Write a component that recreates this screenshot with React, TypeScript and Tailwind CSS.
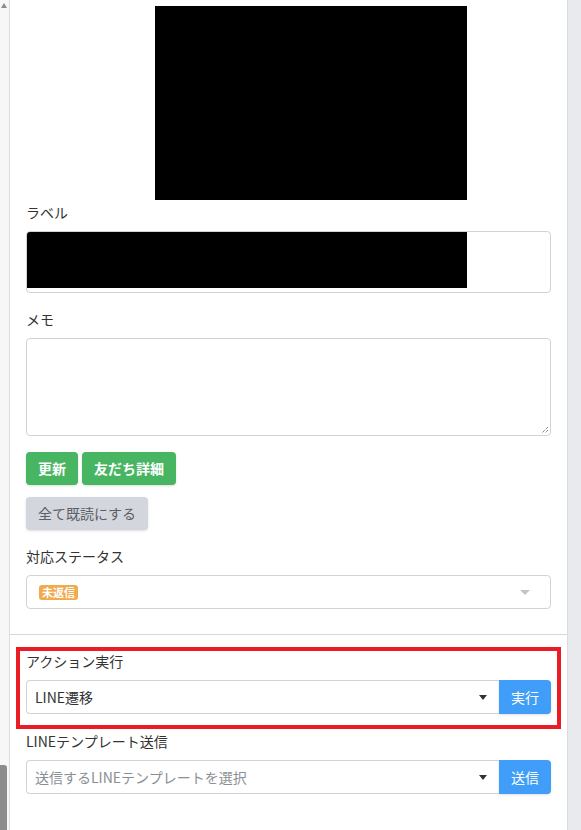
const font = { fontFamily: '"Noto Sans CJK JP", "Noto Sans", sans-serif' };

const Caret = ({ light }: { light?: boolean }) => (
    <span
        className={
            light
                ? "h-0 w-0 border-x-[5px] border-t-[5px] border-x-transparent border-t-[#c0c4cc]"
                : "h-0 w-0 border-x-[4px] border-t-[5px] border-x-transparent border-t-[#333]"
        }
    />
);

const SelectWithButton = ({
    value,
    placeholder,
    button,
}: {
    value?: string;
    placeholder?: string;
    button: string;
}) => (
    <div className="flex h-[34px]">
        <div className="flex flex-1 items-center justify-between rounded-l-[4px] border border-r-0 border-[#ced4da] pl-[8px] pr-[12px] text-[14px]">
            {value ? (
                <span className="text-[#333]">{value}</span>
            ) : (
                <span className="text-[#8a8f95]">{placeholder}</span>
            )}
            <Caret />
        </div>
        <button className="w-[52px] rounded-r-[4px] bg-[#409ef8] text-[14px] text-white shadow-sm">
            {button}
        </button>
    </div>
);

export default function App() {
    return (
        <div className="flex h-[830px] w-[581px] overflow-hidden bg-white text-[#333]" style={font}>
            {/* scrollbar strip */}
            <div className="flex w-[9px] flex-col justify-between bg-[#f7f7f7]">
                <span className="ml-[1px] mt-[3px] h-0 w-0 border-x-[3px] border-b-[5px] border-x-transparent border-b-[#8c8c8c]" />
                <span className="h-[65px] w-[7px] rounded-tr-[3px] bg-[#8c8c8c]" />
            </div>

            <div className="flex w-[559px] flex-col border-x border-[#dcdcdc] px-[16px] pt-[6px]">
                <div className="ml-[129px] h-[194px] w-[312px] bg-black" />

                <div className="mt-[2px] text-[14px] leading-[20px]">ラベル</div>
                <div className="mt-[9px] h-[62px] rounded-[4px] border border-[#ced4da] bg-white">
                    <div className="h-[56px] w-[440px] rounded-tl-[3px] bg-black" />
                </div>

                <div className="mt-[16px] text-[14px] leading-[20px]">メモ</div>
                <div className="relative mt-[9px] h-[98px] rounded-[4px] border border-[#ced4da]">
                    <svg className="absolute bottom-[1px] right-[1px]" width="8" height="8" viewBox="0 0 8 8">
                        <path d="M7 1L1 7M7 4L4 7" stroke="#555" strokeWidth="1" strokeDasharray="1 1" />
                    </svg>
                </div>

                <div className="mt-[16px] flex gap-[4px]">
                    <button className="h-[33px] rounded-[4px] bg-[#47b562] px-[12px] text-[14px] font-bold text-white shadow-sm">
                        更新
                    </button>
                    <button className="h-[33px] rounded-[4px] bg-[#47b562] px-[12px] text-[14px] font-bold text-white shadow-sm">
                        友だち詳細
                    </button>
                </div>

                <div className="mt-[12px]">
                    <button className="h-[33px] w-[122px] rounded-[4px] bg-[#d3d6dd] text-[14px] text-[#5c6066] shadow-sm">
                        全て既読にする
                    </button>
                </div>

                <div className="mt-[16px] text-[14px] leading-[20px]">対応ステータス</div>
                <div className="mt-[9px] flex h-[34px] items-center justify-between rounded-[4px] border border-[#ced4da] pl-[12px] pr-[20px]">
                    <span className="rounded-[3px] bg-[#f0ab4f] px-[3px] text-[11px] font-bold leading-[15px] text-white">
                        未返信
                    </span>
                    <Caret light />
                </div>

                <div className="-mx-[16px] mt-[25px] h-px bg-[#d6d6d6]" />

                <div className="-mx-[10px] mt-[12px] border-[4px] border-[#ec1c24] px-[6px] pb-[11px]">
                    <div className="text-[14px] leading-[20px]">アクション実行</div>
                    <div className="mt-[9px]">
                        <SelectWithButton value="LINE遷移" button="実行" />
                    </div>
                </div>

                <div className="mt-[2px] text-[14px] leading-[20px]">LINEテンプレート送信</div>
                <div className="mt-[9px]">
                    <SelectWithButton placeholder="送信するLINEテンプレートを選択" button="送信" />
                </div>
            </div>

            <div className="flex-1 bg-[#e9eaed]" />
        </div>
    );
}
